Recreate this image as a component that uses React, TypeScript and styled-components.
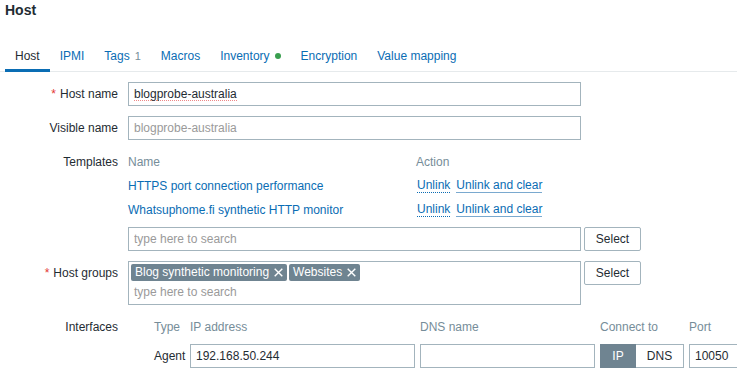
import React from "react";
import styled, { createGlobalStyle } from "styled-components";

const Global = createGlobalStyle`
  html, body { margin: 0; padding: 0; overflow: hidden; background: #fff; }
  body { font-family: "Liberation Sans", Arial, sans-serif; font-size: 12px; color: #1f2c33; }
  * { box-sizing: border-box; }
`;

const BLUE = "#0a6db4";
const GRAY = "#768d99";
const BORDER = "#a3b4bd";

const Page = styled.div`
  width: 737px;
  height: 375px;
  overflow: hidden;
`;

const Title = styled.h1`
  margin: 0;
  padding: 2px 0 0 5px;
  font-size: 14px;
  line-height: 17px;
  font-weight: bold;
  color: #1f2c33;
`;

const TabNav = styled.nav`
  display: flex;
  margin-top: 23px;
  padding-left: 5px;
  border-bottom: 1px solid #e6eaec;
`;

const Tab = styled.div<{ $active?: boolean }>`
  display: flex;
  align-items: center;
  gap: 5px;
  padding: 7px 10px 6px;
  line-height: 14px;
  margin-bottom: -1px;
  border-bottom: 3px solid ${(p) => (p.$active ? BLUE : "transparent")};
  color: ${(p) => (p.$active ? "#1f2c33" : BLUE)};
`;

const Count = styled.span`
  color: ${GRAY};
  font-size: 11px;
`;

const Dot = styled.span`
  width: 6px;
  height: 6px;
  border-radius: 50%;
  background: #3a9f4f;
`;

const Form = styled.div`
  display: grid;
  grid-template-columns: 118px 1fr;
  column-gap: 10px;
  row-gap: 10px;
  margin-top: 10px;
`;

const Label = styled.div`
  text-align: right;
  line-height: 24px;
  white-space: nowrap;
`;

const Req = styled.span`
  color: #e33734;
  margin-right: 4px;
`;

const TextInput = styled.input<{ $spell?: boolean; $w?: number }>`
  width: ${(p) => (p.$w ? `${p.$w}px` : "453px")};
  height: 24px;
  padding: 0 5px;
  border: 1px solid ${BORDER};
  border-radius: 0;
  font: 12px "Liberation Sans", Arial, sans-serif;
  color: #1f2c33;
  outline: none;
  background-color: #fff;
  background-image: ${(p) =>
    p.$spell
      ? "repeating-linear-gradient(to right, #e88 0 1px, transparent 1px 2px)"
      : "none"};
  background-size: 103px 1px;
  background-position: 5px 17px;
  background-repeat: no-repeat;
  &::placeholder { color: #9a9a9a; }
`;

const Section = styled.div`
  display: flex;
  flex-direction: column;
`;

const TplGrid = styled.div`
  display: grid;
  grid-template-columns: 288px auto;
  grid-auto-rows: 24px;
  align-items: center;
`;

const Th = styled.div`
  color: ${GRAY};
  line-height: 24px;
`;

const Link = styled.span`
  color: ${BLUE};
`;

const Actions = styled.div`
  display: flex;
  gap: 6px;
  padding-left: 1px;
`;

const ActionLink = styled.span<{ $solid?: boolean }>`
  color: ${BLUE};
  line-height: 13px;
  border-bottom: 1px ${(p) => (p.$solid ? "solid" : "dotted")} ${(p) => (p.$solid ? "#7aa9cf" : BLUE)};
`;

const InputRow = styled.div<{ $top?: number }>`
  display: flex;
  align-items: flex-start;
  gap: 3px;
  margin-top: ${(p) => p.$top ?? 0}px;
`;

const Button = styled.button`
  width: 57px;
  height: 24px;
  padding: 0;
  border: 1px solid ${BORDER};
  border-radius: 2px;
  background: #fff;
  font: 12px "Liberation Sans", Arial, sans-serif;
  color: #1f2c33;
`;

const Multi = styled.div`
  width: 453px;
  height: 44px;
  border: 1px solid ${BORDER};
  padding: 2px 2px 0;
  display: flex;
  flex-direction: column;
`;

const Chips = styled.div`
  display: flex;
  gap: 2px;
`;

const Chip = styled.span`
  display: inline-flex;
  align-items: center;
  gap: 5px;
  height: 17px;
  padding: 0 4px 0 4px;
  background: #6f8491;
  color: #fff;
  border-radius: 2px;
  line-height: 17px;
`;

const Search = styled.div`
  line-height: 23px;
  padding-left: 3px;
  color: #9a9a9a;
`;

const IfaceGrid = styled.div`
  display: grid;
  grid-template-columns: 21px 31px 225px 175px 84px 60px;
  column-gap: 5px;
  grid-template-rows: 24px 24px;
  row-gap: 5px;
  align-items: center;
`;

const TypeCell = styled.div`
  text-align: right;
  white-space: nowrap;
`;

const Toggle = styled.div`
  display: flex;
  height: 24px;
`;

const Seg = styled.div<{ $on?: boolean; $w: number }>`
  width: ${(p) => p.$w}px;
  display: flex;
  align-items: center;
  justify-content: center;
  border: 1px solid ${(p) => (p.$on ? "#6f8491" : BORDER)};
  border-left-width: ${(p) => (p.$on ? 1 : 0)}px;
  background: ${(p) => (p.$on ? "#6f8491" : "#fff")};
  color: ${(p) => (p.$on ? "#fff" : "#1f2c33")};
`;

const X = () => (
  <svg width="9" height="9" viewBox="0 0 9 9">
    <path d="M0.7 0.7 L8.3 8.3 M8.3 0.7 L0.7 8.3" stroke="#fff" strokeWidth="1.4" />
  </svg>
);

export default function App() {
  return (
    <Page>
      <Global />
      <Title>Host</Title>
      <TabNav>
        <Tab $active>Host</Tab>
        <Tab>IPMI</Tab>
        <Tab>
          Tags<Count>1</Count>
        </Tab>
        <Tab>Macros</Tab>
        <Tab>
          Inventory<Dot />
        </Tab>
        <Tab>Encryption</Tab>
        <Tab>Value mapping</Tab>
      </TabNav>
      <Form>
        <Label>
          <Req>*</Req>Host name
        </Label>
        <div>
          <TextInput $spell defaultValue="blogprobe-australia" />
        </div>

        <Label>Visible name</Label>
        <div>
          <TextInput placeholder="blogprobe-australia" />
        </div>

        <Label>Templates</Label>
        <Section>
          <TplGrid>
            <Th>Name</Th>
            <Th>Action</Th>
            <Link>HTTPS port connection performance</Link>
            <Actions>
              <ActionLink>Unlink</ActionLink>
              <ActionLink $solid>Unlink and clear</ActionLink>
            </Actions>
            <Link>Whatsuphome.fi synthetic HTTP monitor</Link>
            <Actions>
              <ActionLink>Unlink</ActionLink>
              <ActionLink $solid>Unlink and clear</ActionLink>
            </Actions>
          </TplGrid>
          <InputRow $top={5}>
            <TextInput placeholder="type here to search" />
            <Button>Select</Button>
          </InputRow>
        </Section>

        <Label>
          <Req>*</Req>Host groups
        </Label>
        <InputRow>
          <Multi>
            <Chips>
              <Chip>
                Blog synthetic monitoring <X />
              </Chip>
              <Chip>
                Websites <X />
              </Chip>
            </Chips>
            <Search>type here to search</Search>
          </Multi>
          <Button>Select</Button>
        </InputRow>

        <Label>Interfaces</Label>
        <IfaceGrid>
          <span />
          <Th>Type</Th>
          <Th>IP address</Th>
          <Th>DNS name</Th>
          <Th>Connect to</Th>
          <Th>Port</Th>
          <span />
          <TypeCell>Agent</TypeCell>
          <TextInput $w={225} defaultValue="192.168.50.244" />
          <TextInput $w={175} />
          <Toggle>
            <Seg $on $w={36}>IP</Seg>
            <Seg $w={48}>DNS</Seg>
          </Toggle>
          <TextInput $w={60} defaultValue="10050" />
        </IfaceGrid>
      </Form>
    </Page>
  );
}
